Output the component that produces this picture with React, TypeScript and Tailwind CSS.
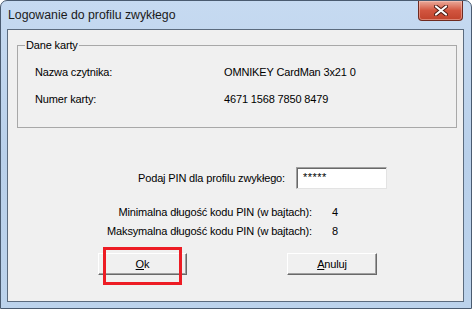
export default function App() {
  const font = { fontFamily: '"Liberation Sans", Arial, sans-serif' };

  return (
    <div
      className="w-[472px] h-[309px] flex flex-col rounded-t-[7px] border border-[#4a5b70] bg-gradient-to-b from-[#c6daf1] via-[#b9d0ea] to-[#bcd3ec] pl-[6px] pr-[7px] pb-[6px] text-black"
      style={font}
    >
      {/* title bar */}
      <div className="h-[28px] flex items-start">
        <div className="mt-[7px] ml-[1px] text-[12.3px] leading-[15px] text-[#1b1b1b]">
          Logowanie do profilu zwykłego
        </div>
        <button className="ml-auto mr-[1px] h-[20px] w-[45px] rounded-b-[4px] border border-t-0 border-[#6e2a20] bg-gradient-to-b from-[#e9a99a] via-[#d2553f] to-[#c1432c] flex items-center justify-center shadow-[inset_0_0_0_1px_rgba(255,210,200,0.45)]">
          <svg width="14" height="11" viewBox="0 0 14 11">
            <path d="M2 1.5 L12 9.5 M12 1.5 L2 9.5" stroke="#4b1a12" strokeWidth="4" strokeLinecap="round" />
            <path d="M2 1.5 L12 9.5 M12 1.5 L2 9.5" stroke="#ffffff" strokeWidth="2.2" strokeLinecap="round" />
          </svg>
        </button>
      </div>

      {/* client area */}
      <div className="flex-1 relative bg-[#f0f0f0] border border-[#5b6b7e] text-[11px] leading-[13px] tracking-[-0.15px]">
        <fieldset className="mt-[9px] ml-[9px] w-[440px] h-[89px] border border-[#a8a8a8] px-[17px]">
          <legend className="ml-[-10px] px-[1px] leading-[13px]">Dane karty</legend>
          <div className="pt-[14px] flex flex-col gap-[14px]">
            <div className="flex">
              <div className="w-[189px]">Nazwa czytnika:</div>
              <div>OMNIKEY CardMan 3x21 0</div>
            </div>
            <div className="flex">
              <div className="w-[189px]">Numer karty:</div>
              <div>4671 1568 7850 8479</div>
            </div>
          </div>
        </fieldset>

        <div className="mt-[39px] flex items-center">
          <div className="w-[277px] text-right">Podaj PIN dla profilu zwykłego:</div>
          <div className="ml-[11px] w-[91px] h-[22px] bg-white border border-t-[#a0a0a0] border-l-[#a0a0a0] border-r-[#e3e3e3] border-b-[#e3e3e3] shadow-[inset_1px_1px_0_#696969] pl-[6px] pt-[3px] tracking-[0.5px]">
            *****
          </div>
        </div>

        <div className="mt-[17px] flex">
          <div className="w-[304px] text-right">Minimalna długość kodu PIN (w bajtach):</div>
          <div className="ml-[20px]">4</div>
        </div>
        <div className="mt-[6px] flex">
          <div className="w-[304px] text-right">Maksymalna długość kodu PIN (w bajtach):</div>
          <div className="ml-[20px]">8</div>
        </div>

        <div className="mt-[15px] flex">
          <button className="ml-[90px] w-[89px] h-[22px] bg-[#f0f0f0] border border-t-white border-l-white border-r-[#696969] border-b-[#696969] shadow-[inset_-1px_-1px_0_#a0a0a0] flex items-center justify-center">
            <span><span className="underline">O</span>k</span>
          </button>
          <button className="ml-[100px] w-[90px] h-[22px] bg-[#f0f0f0] border border-t-white border-l-white border-r-[#696969] border-b-[#696969] shadow-[inset_-1px_-1px_0_#a0a0a0] flex items-center justify-center">
            <span><span className="underline">A</span>nuluj</span>
          </button>
        </div>

        {/* red annotation box */}
        <div className="absolute left-[95px] top-[217px] w-[79px] h-[38px] border-[3px] border-[#ed1c24]" />
      </div>
    </div>
  );
}
